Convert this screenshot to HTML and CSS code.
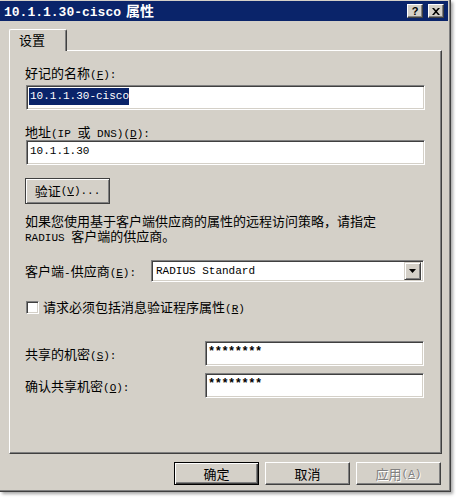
FILE: index.html
```html
<html>
<head>
<meta charset="utf-8">
<title>10.1.1.30-cisco 属性</title>
<link rel="stylesheet" href="styles.css">
</head>
<body>
<div class="window">
  <div class="titlebar">
    <span class="title"><span class="mono">10.1.1.30-cisco</span><span class="cjk">属性</span></span>
    <div class="caption">
      <span class="cbtn help">?</span>
      <span class="cbtn close">
        <svg width="8" height="7" viewBox="0 0 8 7"><path d="M0 0h2l2 2.2 2-2.2h2l-3 3.5 3 3.5h-2l-2-2.2-2 2.2h-2l3-3.5z" fill="#000"/></svg>
      </span>
    </div>
  </div>

  <div class="client">
    <div class="tabs"><div class="tab">设置</div></div>

    <div class="panel">
      <div class="label l1">好记的名称<span class="en">(<u>F</u>):</span></div>
      <div class="edit e1"><span class="sel">10.1.1.30-cisco</span></div>

      <div class="label l2">地址<span class="en">(IP </span>或<span class="en"> DNS)(<u>D</u>):</span></div>
      <div class="edit e2">10.1.1.30</div>

      <div class="btn verify">验证<span class="en">(<u>V</u>)...</span></div>

      <p class="note">如果您使用基于客户端供应商的属性的远程访问策略，请指定<br><span class="en">RADIUS </span>客户端的供应商。</p>

      <div class="row vendor">
        <span class="label rlabel">客户端<span class="en">-</span>供应商<span class="en">(<u>E</u>):</span></span>
        <div class="combo">
          <span class="combo-text">RADIUS Standard</span>
          <span class="drop"><svg width="7" height="4" viewBox="0 0 7 4"><path d="M0 0h7l-3.5 4z" fill="#000"/></svg></span>
        </div>
      </div>

      <div class="row check">
        <span class="box"></span>
        <span class="label">请求必须包括消息验证程序属性<span class="en">(<u>R</u>)</span></span>
      </div>

      <div class="row secret s1">
        <span class="label slabel">共享的机密<span class="en">(<u>S</u>):</span></span>
        <div class="edit pw">********</div>
      </div>
      <div class="row secret s2">
        <span class="label slabel">确认共享机密<span class="en">(<u>O</u>):</span></span>
        <div class="edit pw">********</div>
      </div>
    </div>

    <div class="buttons">
      <div class="btn default">确定</div>
      <div class="btn">取消</div>
      <div class="btn disabled">应用<span class="en">(<u>A</u>)</span></div>
    </div>
  </div>
</div>
</body>
</html>
```

FILE: styles.css
```css
* {
    box-sizing: border-box;
}
body {
    margin: 0;
    background: #fff;
    font-family: "Noto Sans CJK SC", sans-serif;
    font-size: 13px;
    color: #000;
}
.en, .mono {
    font-family: "Liberation Mono", monospace;
}
.en {
    font-size: 11px;
    line-height: 0;
}

/* window frame */
.window {
    width: 451px;
    height: 492px;
    padding-top: 1px;
    background: #d4d0c8;
    border-right: 1px solid #404040;
    border-bottom: 1px solid #404040;
    box-shadow: inset -1px -1px 0 #808080, 2px 2px 3px rgba(0, 0, 0, 0.35);
}
.titlebar {
    height: 20px;
    margin-right: 2px;
    background: #0a246a;
    color: #fff;
    display: flex;
    align-items: center;
    justify-content: space-between;
    padding: 0 4px 0 4px;
}
.title {
    font-weight: bold;
    font-size: 14px;
    line-height: 18px;
}
.title .mono {
    font-size: 13px;
}
.title .cjk {
    margin-left: 5px;
}
.caption {
    display: flex;
    gap: 5px;
}
.cbtn {
    width: 16px;
    height: 14px;
    background: #d4d0c8;
    color: #000;
    border: 1px solid;
    border-color: #fff #404040 #404040 #fff;
    box-shadow: inset -1px -1px 0 #808080;
    display: flex;
    align-items: center;
    justify-content: center;
    font-family: "Liberation Sans", sans-serif;
    font-weight: bold;
    font-size: 11px;
    line-height: 12px;
}

/* dialog client area */
.client {
    padding: 8px 8px 0 9px;
}
.tabs {
    display: flex;
    height: 21px;
}
.tab {
    position: relative;
    z-index: 1;
    width: 58px;
    height: 22px;
    padding: 2px 0 0 9px;
    background: #d4d0c8;
    border-top: 1px solid #fff;
    border-left: 1px solid #fff;
    border-right: 1px solid #404040;
    border-radius: 2px 2px 0 0;
    box-shadow: inset -1px 0 0 #808080;
    line-height: 16px;
}
.panel {
    height: 404px;
    padding: 0 16px 0 16px;
    border: 1px solid;
    border-color: #fff #404040 #404040 #fff;
    box-shadow: inset -1px -1px 0 #808080;
}
.label {
    display: block;
    line-height: 14px;
    margin-left: -1px;
    white-space: nowrap;
}
.l1 {
    margin-top: 15px;
}
.l2 {
    margin-top: 15px;
}

/* sunken edit boxes */
.edit {
    height: 25px;
    background: #fff;
    border: 1px solid;
    border-color: #808080 #fff #fff #808080;
    box-shadow: inset 1px 1px 0 #404040, inset -1px -1px 0 #d4d0c8;
    font-family: "Liberation Mono", monospace;
    font-size: 11px;
    line-height: 21px;
    padding-left: 3px;
    white-space: nowrap;
}
.e1 {
    margin-top: 5px;
    padding-left: 2px;
}
.e2 {
    margin-top: 1px;
}
.sel {
    background: #0a246a;
    color: #fff;
    padding: 2px 0 3px 1px;
}

/* push buttons */
.btn {
    height: 23px;
    width: 85px;
    border: 1px solid;
    border-color: #fff #404040 #404040 #fff;
    box-shadow: inset -1px -1px 0 #808080;
    display: flex;
    align-items: center;
    justify-content: center;
    line-height: 14px;
    white-space: nowrap;
}
.verify {
    margin-top: 13px;
    margin-left: -1px;
    height: 26px;
    border-color: #404040;
    box-shadow: inset 1px 1px 0 #fff, inset -1px -1px 0 #808080;
}
.note {
    height: 30px;
    margin: 9px 0 0 -1px;
    line-height: 15px;
    white-space: nowrap;
}

.row {
    display: flex;
    align-items: center;
}
.vendor {
    margin-top: 17px;
}
.rlabel {
    width: 126px;
}
.combo {
    width: 273px;
    height: 22px;
    background: #fff;
    border: 1px solid;
    border-color: #808080 #fff #fff #808080;
    box-shadow: inset 1px 1px 0 #404040, inset -1px -1px 0 #d4d0c8;
    display: flex;
    align-items: center;
    justify-content: space-between;
    padding: 2px 2px 2px 4px;
}
.combo-text {
    font-family: "Liberation Mono", monospace;
    font-size: 11px;
}
.drop {
    width: 17px;
    height: 18px;
    background: #d4d0c8;
    border: 1px solid;
    border-color: #d4d0c8 #404040 #404040 #d4d0c8;
    box-shadow: inset 1px 1px 0 #fff, inset -1px -1px 0 #808080;
    display: flex;
    align-items: center;
    justify-content: center;
}

.check {
    margin-top: 18px;
    gap: 4px;
}
.box {
    width: 13px;
    height: 13px;
    background: #fff;
    border: 1px solid;
    border-color: #808080 #fff #fff #808080;
    box-shadow: inset 1px 1px 0 #404040, inset -1px -1px 0 #d4d0c8;
}
.check .label {
    margin-left: 0;
}

.secret .slabel {
    width: 180px;
}
.s1 {
    margin-top: 27px;
}
.s2 {
    margin-top: 7px;
}
.pw {
    width: 219px;
    font-size: 12px;
    font-weight: bold;
    letter-spacing: -0.5px;
    padding-left: 2px;
}

/* OK / Cancel / Apply */
.buttons {
    display: flex;
    justify-content: flex-end;
    gap: 6px;
    margin-top: 8px;
    padding-right: 1px;
}
.buttons .btn {
    width: 85px;
}
.default {
    border-color: #000;
    box-shadow: inset 1px 1px 0 #fff, inset -1px -1px 0 #404040, inset -2px -2px 0 #808080;
}
.disabled {
    color: #808080;
    text-shadow: 1px 1px 0 #fff;
}
```
